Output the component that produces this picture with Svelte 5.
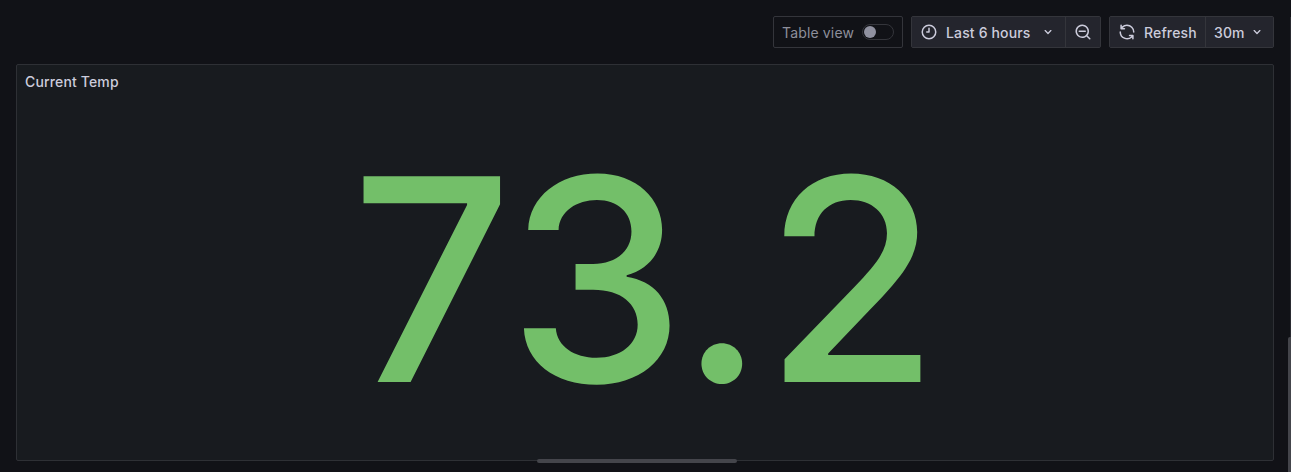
<script>
  let tableView = $state(false);
</script>

<div class="page">
  <div class="toolbar">
    <label class="switchbox"><span>Table view</span><button class="switch" class:on={tableView} aria-label="Table view" onclick={() => (tableView = !tableView)}><i></i></button></label>
    <div class="group time">
      <button class="range">
        <svg width="18" height="18" viewBox="0 0 24 24"><path d="M12 2a10 10 0 1 0 0 20 10 10 0 0 0 0-20Zm0 18a8 8 0 1 1 0-16 8 8 0 0 1 0 16Zm0-14a1 1 0 0 0-1 1v4H9a1 1 0 0 0 0 2h3a1 1 0 0 0 1-1V7a1 1 0 0 0-1-1Z"/></svg>
        <span>Last 6 hours</span>
        <svg class="chev" width="16" height="16" viewBox="0 0 24 24"><path d="M17 9.17a1 1 0 0 0-1.41 0L12 12.71 8.46 9.17a1 1 0 0 0-1.41 1.42l4.24 4.24a1 1 0 0 0 1.42 0L17 10.59a1 1 0 0 0 0-1.42Z"/></svg>
      </button>
      <button class="zoom" aria-label="Zoom out"><svg width="18" height="18" viewBox="0 0 24 24"><path d="M21.71 20.29 18 16.61A9 9 0 1 0 16.61 18l3.68 3.68a1 1 0 0 0 1.42 0 1 1 0 0 0 0-1.39ZM11 18a7 7 0 1 1 0-14 7 7 0 0 1 0 14Zm4-8H7a1 1 0 0 0 0 2h8a1 1 0 0 0 0-2Z"/></svg></button>
    </div>
    <div class="group">
      <button class="refresh"><svg width="18" height="18" viewBox="0 0 24 24"><path d="M19.91 15.51h-4.53a1 1 0 0 0 0 2h2.4A8 8 0 0 1 4 12a1 1 0 1 0-2 0 10 10 0 0 0 16.88 7.23V21a1 1 0 0 0 2 0v-4.5a1 1 0 0 0-.97-.99ZM12 2a10 10 0 0 0-6.88 2.77V3a1 1 0 0 0-2 0v4.5a1 1 0 0 0 1 1h4.5a1 1 0 0 0 0-2h-2.4A8 8 0 0 1 20 12a1 1 0 0 0 2 0A10 10 0 0 0 12 2Z"/></svg><span>Refresh</span></button>
      <button class="interval"><span>30m</span><svg width="16" height="16" viewBox="0 0 24 24"><path d="M17 9.17a1 1 0 0 0-1.41 0L12 12.71 8.46 9.17a1 1 0 0 0-1.41 1.42l4.24 4.24a1 1 0 0 0 1.42 0L17 10.59a1 1 0 0 0 0-1.42Z"/></svg></button>
    </div>
  </div>
  <section class="panel">
    <h2>Current Temp</h2>
    <div class="value">73.2</div>
  </section>
  <div class="handle"></div>
  <div class="edge"></div>
  <div class="scroll"></div>
</div>

<style>
  :global(body) { background: #111217; overflow: hidden; }
  .page { position: relative; box-sizing: border-box; width: 1291px; height: 472px; padding: 16px 17px 11px 16px; background: #111217; color: #ccccdc; font: 500 14px/22px Inter, sans-serif; letter-spacing: .15px; overflow: hidden; display: flex; flex-direction: column; gap: 16px; }
  .toolbar { display: flex; justify-content: flex-end; gap: 8px; height: 32px; flex: none; }
  button { font: inherit; letter-spacing: inherit; color: inherit; background: #24252d; border: 0; margin: 0; padding: 0; display: flex; align-items: center; }
  button span, .switchbox span { padding-top: 2px; }
  svg { fill: currentColor; flex: none; display: block; }
  .switchbox { box-sizing: border-box; width: 130px; border: 1px solid #34353b; border-radius: 2px; display: flex; align-items: center; justify-content: space-between; padding: 0 8px; color: #8e8f9b; font-weight: 400; }
  .switch { box-sizing: border-box; width: 32px; height: 16px; border: 1px solid #34353b; border-radius: 8px; background: #111217; padding-left: 1px; }
  .switch i { width: 12px; height: 12px; border-radius: 50%; background: #9091a0; }
  .switch.on { justify-content: flex-end; }
  .group { box-sizing: border-box; display: flex; border: 1px solid #34353b; border-radius: 2px; background: #24252d; }
  .time { width: 190px; }
  .range { width: 153px; padding-left: 8px; gap: 8px; }
  .range .chev { margin-left: 1px; }
  .zoom { width: 35px; justify-content: center; border-left: 1px solid #34353b; }
  .refresh { width: 95px; padding-left: 8px; gap: 8px; box-sizing: border-box; }
  .interval { width: 68px; padding-left: 8px; gap: 4px; box-sizing: border-box; border-left: 1px solid #34353b; }
  .panel { box-sizing: border-box; flex: 1; border: 1px solid #2e3035; border-radius: 2px; background: #181b1f; display: flex; flex-direction: column; overflow: hidden; }
  h2 { box-sizing: border-box; margin: 0; padding: 2px 8px 0; font: inherit; line-height: 30px; height: 32px; }
  .value { flex: 1; display: flex; align-items: center; justify-content: center; font-size: 282.7px; line-height: 340px; letter-spacing: 0; color: #73bf69; }
  .handle { position: absolute; left: 537px; top: 459px; width: 200px; height: 4px; border-radius: 4px; background: #44454b; }
  .edge { position: absolute; right: 0; top: 17px; bottom: 0; width: 1px; background: #2a2b31; }
  .scroll { position: absolute; right: 0; top: 337px; width: 3px; height: 135px; border-top-left-radius: 2px; background: #44454b; }
</style>
